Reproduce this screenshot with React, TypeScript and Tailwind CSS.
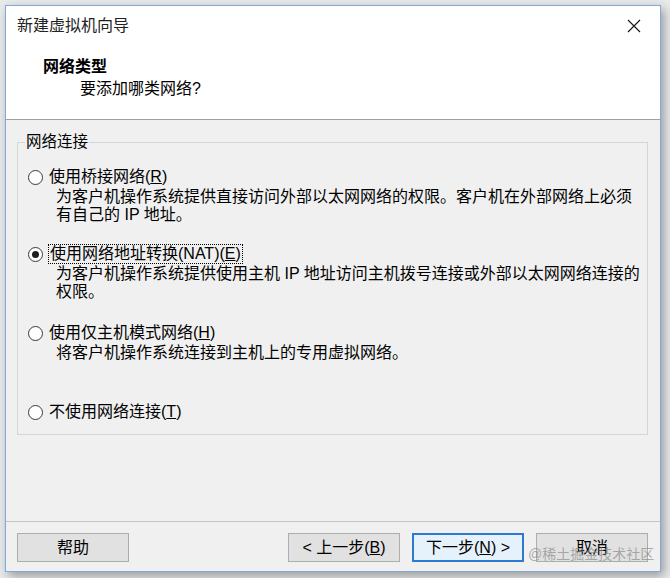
import { ReactNode } from "react";

interface OptionProps {
  label: ReactNode;
  desc?: string[];
  checked?: boolean;
  focused?: boolean;
  className?: string;
}

const Radio = ({ checked }: { checked?: boolean }) => (
  <span className="w-[15px] h-[15px] rounded-full border border-[#3a3a3a] bg-white flex items-center justify-center shrink-0">
    {checked && <span className="w-[7px] h-[7px] rounded-full bg-[#1e1e1e]" />}
  </span>
);

const Option = ({ label, desc, checked, focused, className }: OptionProps) => (
  <div className={className}>
    <div className="flex items-center h-[20px]">
      <Radio checked={checked} />
      <span
        className={
          focused
            ? "ml-[5px] leading-[18px] border border-dotted border-black px-px"
            : "ml-[6px] leading-[20px]"
        }
      >
        {label}
      </span>
    </div>
    {desc && (
      <div className="pl-[28px] mt-px">
        {desc.map((line, i) => (
          <div key={i} className="leading-[18px] whitespace-nowrap">
            {line}
          </div>
        ))}
      </div>
    )}
  </div>
);

const Button = ({ children, primary }: { children: ReactNode; primary?: boolean }) => (
  <button
    className={
      primary
        ? "w-[112px] h-[29px] bg-[#e5f1fb] border-2 border-[#2c79d0] text-[16px] leading-none text-black"
        : "w-[112px] h-[29px] bg-[#e1e1e1] border border-[#adadad] text-[16px] leading-none text-black"
    }
  >
    {children}
  </button>
);

export default function App() {
  return (
    <div className="w-[670px] h-[578px] bg-[#e9eaec] pt-[5px] pl-[5px] font-['Liberation_Sans','Noto_Sans_CJK_SC',sans-serif] text-[16px] text-black overflow-hidden">
      <div className="relative w-[656px] h-[567px] border border-[#7fa9d9] bg-[#f0f0f0] flex flex-col shadow-[3px_4px_10px_rgba(0,0,0,0.35)]">
        {/* Title bar */}
        <div className="h-[40px] bg-white flex items-center justify-between pl-[11px] pr-[14px]">
          <span className="text-[16px] text-[#222]">新建虚拟机向导</span>
          <svg width="14" height="14" viewBox="0 0 14 14" className="mr-[5px]">
            <path d="M1 1 L13 13 M13 1 L1 13" stroke="#1a1a1a" strokeWidth="1.2" />
          </svg>
        </div>

        {/* Header */}
        <div className="h-[74px] bg-white border-b border-[#a0a0a0] pt-[11px]">
          <div className="pl-[37px] font-bold leading-[20px]">网络类型</div>
          <div className="pl-[74px] mt-[2px] leading-[20px]">要添加哪类网络?</div>
        </div>

        {/* Body */}
        <div className="h-[401px] pl-[11px] pt-[12px]">
          <fieldset className="w-[631px] h-[303px] border border-[#d5d5d5] pl-[10px]">
            <legend className="-ml-[3px] px-[1px] leading-[20px] text-[15.5px]">网络连接</legend>
            <Option
              className="mt-[15px]"
              label={<>使用桥接网络(<u>R</u>)</>}
              desc={[
                "为客户机操作系统提供直接访问外部以太网网络的权限。客户机在外部网络上必须",
                "有自己的 IP 地址。",
              ]}
            />
            <Option
              className="mt-[20px]"
              checked
              focused
              label={<>使用网络地址转换(NAT)(<u>E</u>)</>}
              desc={[
                "为客户机操作系统提供使用主机 IP 地址访问主机拨号连接或外部以太网网络连接的",
                "权限。",
              ]}
            />
            <Option
              className="mt-[22px]"
              label={<>使用仅主机模式网络(<u>H</u>)</>}
              desc={["将客户机操作系统连接到主机上的专用虚拟网络。"]}
            />
            <Option className="mt-[40px]" label={<>不使用网络连接(<u>T</u>)</>} />
          </fieldset>
        </div>

        {/* Footer */}
        <div className="flex-1 border-t border-[#c4c4c4] pt-[11px] pl-[11px] pr-[12px] flex justify-between">
          <Button>帮助</Button>
          <div className="flex gap-[12px]">
            <Button>&lt; 上一步(<u>B</u>)</Button>
            <Button primary>下一步(<u>N</u>) &gt;</Button>
            <Button>取消</Button>
          </div>
        </div>

        {/* watermark */}
        <span className="absolute left-[522px] top-[538px] text-[14px] text-[#8a8a8a]/70 whitespace-nowrap">
          @稀土掘金技术社区
        </span>
      </div>
    </div>
  );
}
